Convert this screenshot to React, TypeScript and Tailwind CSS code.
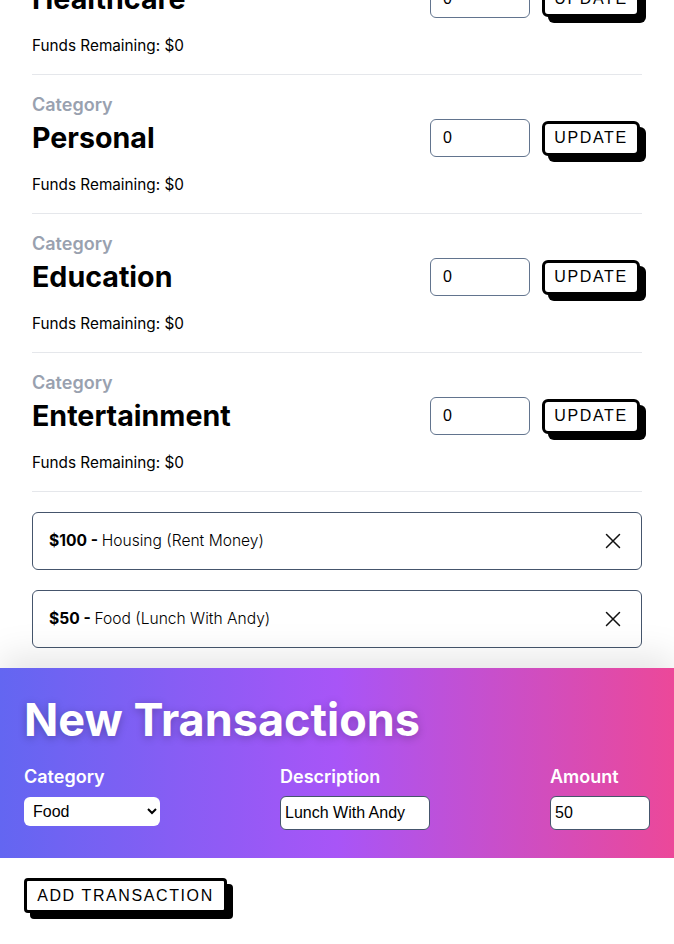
import React from "react";

const categories = ["Healthcare", "Personal", "Education", "Entertainment"];

const transactions = [
  { amount: "$100", category: "Housing", description: "Rent Money" },
  { amount: "$50", category: "Food", description: "Lunch With Andy" },
];

function CategoryRow({ name }: { name: string }) {
  return (
    <div className="pt-[18px] pb-4 border-b border-gray-200">
      <div className="text-lg leading-6 font-semibold text-gray-400">Category</div>
      <div className="mt-0.5 flex items-center justify-between h-[38px]">
        <h2 className="text-[28.6px] leading-none font-bold text-black">{name}</h2>
        <div className="flex items-center gap-3 pr-0.5">
          <input
            defaultValue="0"
            className="w-[100px] h-[38px] rounded-md border border-slate-500 px-3 text-base text-black font-['Liberation_Sans',Arial,sans-serif] outline-none"
          />
          <button className="w-[98px] h-[35px] border-[3px] border-black rounded-md bg-white text-base tracking-[0.1em] text-black font-['Liberation_Sans',Arial,sans-serif] shadow-[6px_6px_0_0_#000]">
            UPDATE
          </button>
        </div>
      </div>
      <div className="mt-4 text-[15.3px] leading-6 text-black">Funds Remaining: $0</div>
    </div>
  );
}

export default function App() {
  return (
    <div className="font-['Inter',sans-serif] bg-white overflow-hidden">
      <div className="px-8">
        <div className="mt-[-64px]">
          {categories.map((c) => (
            <CategoryRow key={c} name={c} />
          ))}
        </div>
        <div className="mt-5 flex flex-col gap-5 pb-5">
          {transactions.map((t) => (
            <div
              key={t.amount}
              className="h-[58px] flex items-center justify-between rounded-md border border-slate-600 pl-4 pr-5"
            >
              <div className="text-[15.6px] text-black">
                <span className="font-bold">{t.amount} - </span>
                <span className="font-light">
                  {t.category} ({t.description})
                </span>
              </div>
              <svg width="16" height="16" viewBox="0 0 16 16" fill="none" stroke="#111" strokeWidth="1.5" strokeLinecap="round">
                <path d="M1.5 1.5L14.5 14.5M14.5 1.5L1.5 14.5" />
              </svg>
            </div>
          ))}
        </div>
      </div>
      <div className="relative bg-white shadow-[0_-12px_34px_rgba(0,0,0,0.1)]">
        <div className="bg-[linear-gradient(to_right,#6366f1,#a855f7,#ec4899)] px-6 pt-7 pb-7">
          <h1 className="text-[45px] leading-[48px] font-bold text-white [text-shadow:0_2px_8px_rgba(0,0,0,0.25)]">
            New Transactions
          </h1>
          <div className="mt-[19px] flex justify-between">
            <div className="flex flex-col">
              <label className="text-lg leading-7 font-semibold text-white">Category</label>
              <select
                defaultValue="Food"
                className="mt-[6px] w-[136px] h-[29px] rounded-md bg-white pl-[5px] text-base text-black font-['Liberation_Sans',Arial,sans-serif] outline-none"
              >
                <option>Housing</option>
                <option>Food</option>
                <option>Healthcare</option>
                <option>Personal</option>
                <option>Education</option>
                <option>Entertainment</option>
              </select>
            </div>
            <div className="flex flex-col">
              <label className="text-lg leading-7 font-semibold text-white">Description</label>
              <input
                defaultValue="Lunch With Andy"
                className="mt-[5px] w-[150px] h-[34px] rounded-md border border-slate-600 bg-white px-1 text-base text-black font-['Liberation_Sans',Arial,sans-serif] outline-none"
              />
            </div>
            <div className="flex flex-col">
              <label className="text-lg leading-7 font-semibold text-white">Amount</label>
              <input
                defaultValue="50"
                className="mt-[5px] w-[100px] h-[34px] rounded-md border border-slate-600 bg-white px-1 text-base text-black font-['Liberation_Sans',Arial,sans-serif] outline-none"
              />
            </div>
          </div>
        </div>
        <div className="px-6 pt-5 pb-6">
          <button className="w-[203px] h-[35px] border-[3px] border-black rounded-sm bg-white text-base tracking-[0.1em] text-black font-['Liberation_Sans',Arial,sans-serif] shadow-[6px_6px_0_0_#000]">
            ADD TRANSACTION
          </button>
        </div>
      </div>
    </div>
  );
}
